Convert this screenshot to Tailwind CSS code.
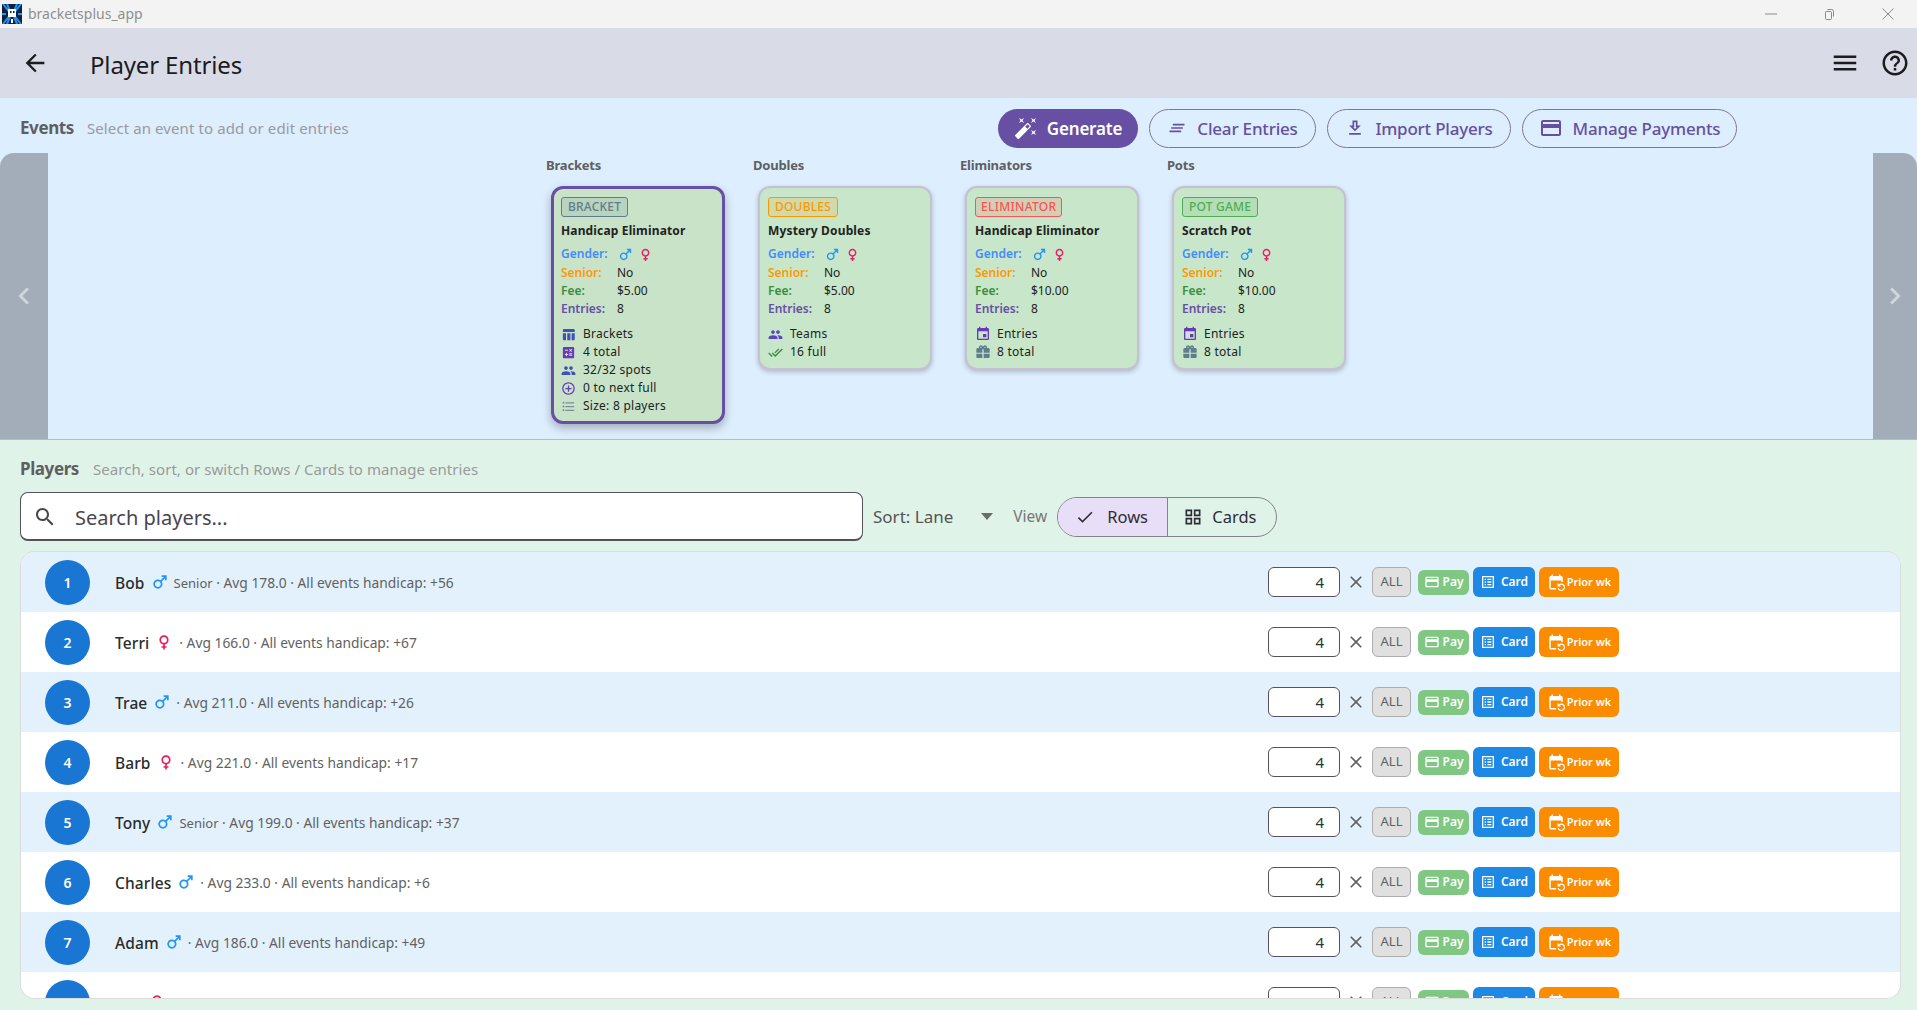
<!DOCTYPE html>
<html lang="en">
<head>
  <meta charset="UTF-8">
  <title>bracketsplus_app</title>
  <script src="https://cdn.jsdelivr.net/npm/@tailwindcss/browser@4"></script>
</head>
<body class="font-['Noto_Sans',sans-serif] antialiased overflow-hidden">

  <!-- icon sprite -->
  <svg class="hidden">
    <symbol id="i-male" viewBox="0 0 24 24"><path d="M9.5 11c1.93 0 3.5 1.57 3.5 3.5S11.43 18 9.5 18 6 16.43 6 14.5 7.57 11 9.5 11zm0-2C6.46 9 4 11.46 4 14.5S6.46 20 9.5 20s5.5-2.46 5.5-5.5c0-1.16-.36-2.23-.97-3.12L18 7.42V10h2V4h-6v2h2.58l-3.97 3.97C11.73 9.36 10.66 9 9.5 9z"/></symbol>
    <symbol id="i-female" viewBox="0 0 24 24"><path d="M17.5 9.5C17.5 6.46 15.04 4 12 4S6.5 6.46 6.5 9.5c0 2.7 1.94 4.93 4.5 5.4V17H9v2h2v2h2v-2h2v-2h-2v-2.1c2.56-.47 4.5-2.7 4.5-5.4zm-9 0C8.5 7.57 10.07 6 12 6s3.5 1.57 3.5 3.5S13.93 13 12 13s-3.5-1.57-3.5-3.5z"/></symbol>
    <symbol id="i-table" viewBox="0 0 24 24"><path d="M10 10.02h5V21h-5zM17 21h3c1.1 0 2-.9 2-2v-9h-5v11zm3-18H5c-1.1 0-2 .9-2 2v3h19V5c0-1.1-.9-2-2-2zM3 19c0 1.1.9 2 2 2h3V10H3v9z"/></symbol>
    <symbol id="i-calc" viewBox="0 0 24 24"><path d="M19 3H5c-1.1 0-2 .9-2 2v14c0 1.1.9 2 2 2h14c1.1 0 2-.9 2-2V5c0-1.1-.9-2-2-2zm-5.97 4.06L14.09 6l1.41 1.41L16.91 6l1.06 1.06-1.41 1.41 1.41 1.41-1.06 1.06-1.41-1.4-1.41 1.41-1.06-1.06 1.41-1.41-1.41-1.42zm-6.78.66h5v1.5h-5v-1.5zM11.5 16h-2v2H8v-2H6v-1.5h2v-2h1.5v2h2V16zm6.5 1.25h-5v-1.5h5v1.5zm0-2.5h-5v-1.5h5v1.5z"/></symbol>
    <symbol id="i-people" viewBox="0 0 24 24"><path d="M16 11c1.66 0 2.99-1.34 2.99-3S17.66 5 16 5c-1.66 0-3 1.34-3 3s1.34 3 3 3zm-8 0c1.66 0 2.99-1.34 2.99-3S9.66 5 8 5C6.34 5 5 6.34 5 8s1.34 3 3 3zm0 2c-2.33 0-7 1.17-7 3.5V19h14v-2.5c0-2.33-4.67-3.5-7-3.5zm8 0c-.29 0-.62.02-.97.05 1.16.84 1.97 1.97 1.97 3.45V19h6v-2.5c0-2.33-4.67-3.5-7-3.5z"/></symbol>
    <symbol id="i-add" viewBox="0 0 24 24"><path d="M13 7h-2v4H7v2h4v4h2v-4h4v-2h-4V7zm-1-5C6.48 2 2 6.48 2 12s4.48 10 10 10 10-4.48 10-10S17.52 2 12 2zm0 18c-4.41 0-8-3.59-8-8s3.59-8 8-8 8 3.59 8 8-3.59 8-8 8z"/></symbol>
    <symbol id="i-list" viewBox="0 0 24 24"><path d="M4 10.5c-.83 0-1.5.67-1.5 1.5s.67 1.5 1.5 1.5 1.5-.67 1.5-1.5-.67-1.5-1.5-1.5zm0-6c-.83 0-1.5.67-1.5 1.5S3.17 7.5 4 7.5 5.5 6.83 5.5 6 4.83 4.5 4 4.5zm0 12c-.83 0-1.5.68-1.5 1.5s.68 1.5 1.5 1.5 1.5-.68 1.5-1.5-.67-1.5-1.5-1.5zM7 19h14v-2H7v2zm0-6h14v-2H7v2zm0-8v2h14V5H7z"/></symbol>
    <symbol id="i-done" viewBox="0 0 24 24"><path d="M18 7l-1.41-1.41-6.34 6.34 1.41 1.41L18 7zm4.24-1.41L11.66 16.17 7.48 12l-1.41 1.41L11.66 19l12-12-1.42-1.41zM.41 13.41L6 19l1.41-1.41L1.83 12 .41 13.41z"/></symbol>
    <symbol id="i-event" viewBox="0 0 24 24"><path d="M17 12h-5v5h5v-5zM16 1v2H8V1H6v2H5c-1.11 0-1.99.9-1.99 2L3 19c0 1.1.89 2 2 2h14c1.1 0 2-.9 2-2V5c0-1.1-.9-2-2-2h-1V1h-2zm3 18H5V8h14v11z"/></symbol>
    <symbol id="i-redeem" viewBox="0 0 24 24"><path fill-rule="evenodd" d="M20 6h-2.18c.11-.31.18-.65.18-1 0-1.66-1.34-3-3-3-1.05 0-1.96.54-2.5 1.35l-.5.67-.5-.68C10.96 2.54 10.05 2 9 2 7.34 2 6 3.34 6 5c0 .35.07.69.18 1H4c-1.11 0-1.99.89-1.99 2L2 19c0 1.11.89 2 2 2h16c1.11 0 2-.89 2-2V8c0-1.11-.89-2-2-2zm-5-2c.55 0 1 .45 1 1s-.45 1-1 1-1-.45-1-1 .45-1 1-1zM9 4c.55 0 1 .45 1 1s-.45 1-1 1-1-.45-1-1 .45-1 1-1zm2 4h2v13h-2zM2 13h9v1.5H2zm11 0h9v1.5h-9z"/></symbol>
    <symbol id="i-pay" viewBox="0 0 24 24"><path d="M20 4H4c-1.11 0-1.99.89-1.99 2L2 18c0 1.11.89 2 2 2h16c1.11 0 2-.89 2-2V6c0-1.11-.89-2-2-2zm0 14H4v-6h16v6zm0-10H4V6h16v2z"/></symbol>
    <symbol id="i-card" viewBox="0 0 24 24"><path d="M19 5v14H5V5h14m1.1-2H3.9c-.5 0-.9.4-.9.9v16.2c0 .4.4.9.9.9h16.2c.4 0 .9-.5.9-.9V3.9c0-.5-.5-.9-.9-.9zM11 7h6v2h-6V7zm0 4h6v2h-6v-2zm0 4h6v2h-6zM7 7h2v2H7zm0 4h2v2H7zm0 4h2v2H7z"/></symbol>
    <symbol id="i-prior" viewBox="0 0 24 24"><path d="M21 12V6c0-1.1-.9-2-2-2h-1V2h-2v2H8V2H6v2H5c-1.1 0-2 .9-2 2v14c0 1.1.9 2 2 2h7v-2H5V10h14v2h2zm-5.36 8c.43 1.45 1.77 2.5 3.36 2.5 1.93 0 3.5-1.57 3.5-3.5s-1.57-3.5-3.5-3.5c-.95 0-1.82.38-2.45 1H18V18h-4v-4h1.5v1.43c.9-.88 2.14-1.43 3.5-1.43 2.76 0 5 2.24 5 5s-2.24 5-5 5c-2.42 0-4.44-1.72-4.9-4h1.54z"/></symbol>
    <symbol id="i-close" viewBox="0 0 24 24"><path d="M19 6.41L17.59 5 12 10.59 6.41 5 5 6.41 10.59 12 5 17.59 6.41 19 12 13.41 17.59 19 19 17.59 13.41 12z"/></symbol>
  </svg>

  <div class="w-[1917px] h-[1010px] flex flex-col">

    <!-- Window title bar -->
    <div class="h-[28px] bg-[#f3f3f3] flex items-center shrink-0">
      <svg class="w-[20px] h-[20px] ml-[2px]" viewBox="0 0 20 20">
        <rect width="20" height="20" fill="#10203a"/>
        <path d="M1 0l7 9M19 0l-7 9M1 20l7-9M19 20l-7-9M0 10h4M16 10h4M5 0l3 7M15 0l-3 7M5 20l3-7M15 20l-3-7" stroke="#1f93f0" stroke-width="2"/>
        <rect x="6" y="5" width="8" height="8" fill="#fff"/>
        <rect x="8" y="7" width="1.5" height="2" fill="#10203a"/>
        <rect x="11" y="7" width="1.5" height="2" fill="#10203a"/>
        <rect x="9" y="15" width="2" height="4" fill="#fff"/>
      </svg>
      <span class="ml-[6px] mb-[1px] text-[14px] text-[#8f8f8f]">bracketsplus_app</span>
      <div class="ml-auto flex items-center">
        <svg class="w-[12px] h-[12px] mr-[46px]" viewBox="0 0 12 12"><path d="M0 6h12" stroke="#8a8a8a"/></svg>
        <svg class="w-[12px] h-[12px] mr-[47px]" viewBox="0 0 12 12" fill="none" stroke="#8a8a8a"><rect x="2.5" y="3.5" width="6" height="8" rx="1"/><path d="M4.5 1.5h4a2 2 0 0 1 2 2v5"/></svg>
        <svg class="w-[12px] h-[12px] mr-[23px]" viewBox="0 0 12 12"><path d="M.5.5l11 11M11.5.5l-11 11" stroke="#8a8a8a"/></svg>
      </div>
    </div>

    <!-- App bar -->
    <div class="h-[70px] bg-[#d9dce6] flex items-center shrink-0">
      <svg class="w-[28px] h-[28px] ml-[21px] fill-[#1c1b1f]" viewBox="0 0 24 24"><path d="M20 11H7.83l5.59-5.59L12 4l-8 8 8 8 1.41-1.41L7.83 13H20v-2z"/></svg>
      <h1 class="ml-[41px] pt-[3px] text-[24px] text-[#1c1b1f] tracking-[-0.15px]">Player Entries</h1>
      <div class="ml-auto flex items-center">
        <svg class="w-[30px] h-[30px] fill-[#1c1b1f]" viewBox="0 0 24 24"><path d="M3 18h18v-2H3v2zm0-5h18v-2H3v2zm0-7v2h18V6H3z"/></svg>
        <svg class="w-[30px] h-[30px] ml-[20px] mr-[7px] fill-[#1c1b1f]" viewBox="0 0 24 24"><path d="M11 18h2v-2h-2v2zm1-16C6.48 2 2 6.48 2 12s4.48 10 10 10 10-4.48 10-10S17.52 2 12 2zm0 18c-4.41 0-8-3.59-8-8s3.59-8 8-8 8 3.59 8 8-3.59 8-8 8zm0-14c-2.21 0-4 1.79-4 4h2c0-1.1.9-2 2-2s2 .9 2 2c0 2-3 1.75-3 5h2c0-2.25 3-2.5 3-5 0-2.21-1.79-4-4-4z"/></svg>
      </div>
    </div>

    <!-- Events -->
    <section class="h-[342px] bg-[#ddeeff] border-b border-[#b5bcc4] flex flex-col shrink-0">
      <div class="h-[55px] flex items-center pl-[20px] pr-[180px] pt-[5px] shrink-0">
        <span class="text-[17px] font-bold text-[#5f5f5f] tracking-[-0.4px]">Events</span>
        <span class="ml-[13px] text-[15px] text-[#9a9a9a] tracking-[0.1px]">Select an event to add or edit entries</span>
        <div class="ml-auto flex gap-[11px] text-[17px] font-medium text-[#65509f] tracking-[-0.2px]">
          <button class="h-[39px] w-[140px] rounded-full bg-[#674fa3] text-white font-semibold flex items-center justify-center gap-[9px]">
            <svg class="w-[24px] h-[24px] fill-white" viewBox="0 0 24 24"><path d="M7.5 5.6L10 7 8.6 4.5 10 2 7.5 3.4 5 2l1.4 2.5L5 7zm12 9.8L17 14l1.4 2.5L17 19l2.5-1.4L22 19l-1.4-2.5L22 14zM22 2l-2.5 1.4L17 2l1.4 2.5L17 7l2.5-1.4L22 7l-1.4-2.5zm-7.63 5.29c-.39-.39-1.02-.39-1.41 0L1.29 18.96c-.39.39-.39 1.02 0 1.41l2.34 2.34c.39.39 1.02.39 1.41 0L16.7 11.05c.39-.39.39-1.02 0-1.41l-2.33-2.35zm-1.03 5.49l-2.12-2.12 2.44-2.44 2.12 2.12-2.44 2.44z"/></svg>
            <span class="pt-[1px]">Generate</span>
          </button>
          <button class="h-[39px] w-[167px] rounded-full border border-[#7f7a88] flex items-center justify-center gap-[10px]">
            <svg class="w-[20px] h-[20px] fill-[#65509f]" viewBox="0 0 24 24"><path d="M5 13h14v-2H5v2zm-2 4h14v-2H3v2zM7 7v2h14V7H7z"/></svg>
            <span class="pt-[1px]">Clear Entries</span>
          </button>
          <button class="h-[39px] w-[184px] rounded-full border border-[#7f7a88] flex items-center justify-center gap-[10px]">
            <svg class="w-[20px] h-[20px] fill-[#65509f]" viewBox="0 0 24 24"><path d="M19 9h-4V3H9v6H5l7 7 7-7zm-8 2V5h2v6h1.17L12 13.17 9.83 11H11zm-6 7h14v2H5z"/></svg>
            <span class="pt-[1px]">Import Players</span>
          </button>
          <button class="h-[39px] w-[215px] rounded-full border border-[#7f7a88] flex items-center justify-center gap-[10px]">
            <svg class="w-[24px] h-[24px] fill-[#65509f]" viewBox="0 0 24 24"><use href="#i-pay"/></svg>
            <span class="pt-[1px]">Manage Payments</span>
          </button>
        </div>
      </div>

      <!-- Carousel -->
      <div class="flex-1 flex">
        <div class="w-[48px] bg-[#a3adb9] rounded-tl-[14px] flex items-center justify-center">
          <svg class="w-[34px] h-[34px] fill-white/50" viewBox="0 0 24 24"><path d="M15.41 7.41L14 6l-6 6 6 6 1.41-1.41L10.83 12z"/></svg>
        </div>
        <div class="flex-1 pl-[498px] flex">

          <!-- Brackets -->
          <div class="w-[207px]">
            <div class="h-[33px] flex items-end pb-[11px] text-[13px] font-bold text-[#5f5f5f] tracking-[-0.2px]">Brackets</div>
            <div class="ml-[5px] w-[174px] h-[238px] bg-[#c8e3c8] border-[3px] border-[#674fa3] rounded-[12px] shadow-[0_4px_10px_rgba(0,0,0,0.28)] px-[7px] pt-[8px] text-[12px] text-[#222]">
              <span class="inline-block h-[20px] leading-[18px] px-[6px] rounded-[3px] border border-[#607d8b] bg-[#607d8b]/15 text-[#607d8b] font-medium tracking-[0.2px]">BRACKET</span>
              <div class="mt-[4px] h-[20px] leading-[20px] font-bold tracking-[0.15px] whitespace-nowrap">Handicap Eliminator</div>
              <div class="mt-[3px] h-[20px] flex items-center"><span class="w-[56px] text-[#448aff] font-semibold">Gender:</span><svg class="w-[17px] h-[17px] fill-[#2196f3]"><use href="#i-male"/></svg><svg class="w-[17px] h-[17px] ml-[3px] fill-[#e91e63]"><use href="#i-female"/></svg></div>
              <div class="h-[18px] flex items-center"><span class="w-[56px] text-[#ff9800] font-semibold">Senior:</span>No</div>
              <div class="h-[18px] flex items-center"><span class="w-[56px] text-[#388e3c] font-semibold">Fee:</span>$5.00</div>
              <div class="h-[18px] flex items-center"><span class="w-[56px] text-[#6750a4] font-semibold">Entries:</span>8</div>
              <div class="mt-[7px] h-[18px] flex items-center gap-[7px] tracking-[0.25px]"><svg class="w-[15px] h-[15px] fill-[#3f51b5]"><use href="#i-table"/></svg>Brackets</div>
              <div class="h-[18px] flex items-center gap-[7px] tracking-[0.25px]"><svg class="w-[15px] h-[15px] fill-[#673ab7]"><use href="#i-calc"/></svg>4 total</div>
              <div class="h-[18px] flex items-center gap-[7px] tracking-[0.25px]"><svg class="w-[15px] h-[15px] fill-[#3f51b5]"><use href="#i-people"/></svg>32/32 spots</div>
              <div class="h-[18px] flex items-center gap-[7px] tracking-[0.25px]"><svg class="w-[15px] h-[15px] fill-[#673ab7]"><use href="#i-add"/></svg>0 to next full</div>
              <div class="h-[18px] flex items-center gap-[7px] tracking-[0.25px]"><svg class="w-[15px] h-[15px] fill-[#78909c]"><use href="#i-list"/></svg>Size: 8 players</div>
            </div>
          </div>

          <!-- Doubles -->
          <div class="w-[207px]">
            <div class="h-[33px] flex items-end pb-[11px] text-[13px] font-bold text-[#5f5f5f] tracking-[-0.2px]">Doubles</div>
            <div class="ml-[5px] w-[174px] h-[184px] bg-[#c8e6c9] border-2 border-[#c5c1cf] rounded-[12px] shadow-[0_2px_5px_rgba(0,0,0,0.22)] px-[8px] pt-[9px] text-[12px] text-[#222]">
              <span class="inline-block h-[20px] leading-[18px] px-[6px] rounded-[3px] border border-[#ff9800] bg-[#ff9800]/15 text-[#ff9800] font-medium tracking-[0.2px]">DOUBLES</span>
              <div class="mt-[4px] h-[20px] leading-[20px] font-bold tracking-[0.15px] whitespace-nowrap">Mystery Doubles</div>
              <div class="mt-[3px] h-[20px] flex items-center"><span class="w-[56px] text-[#448aff] font-semibold">Gender:</span><svg class="w-[17px] h-[17px] fill-[#2196f3]"><use href="#i-male"/></svg><svg class="w-[17px] h-[17px] ml-[3px] fill-[#e91e63]"><use href="#i-female"/></svg></div>
              <div class="h-[18px] flex items-center"><span class="w-[56px] text-[#ff9800] font-semibold">Senior:</span>No</div>
              <div class="h-[18px] flex items-center"><span class="w-[56px] text-[#388e3c] font-semibold">Fee:</span>$5.00</div>
              <div class="h-[18px] flex items-center"><span class="w-[56px] text-[#6750a4] font-semibold">Entries:</span>8</div>
              <div class="mt-[7px] h-[18px] flex items-center gap-[7px] tracking-[0.25px]"><svg class="w-[15px] h-[15px] fill-[#5e45c0]"><use href="#i-people"/></svg>Teams</div>
              <div class="h-[18px] flex items-center gap-[7px] tracking-[0.25px]"><svg class="w-[15px] h-[15px] fill-[#388e3c]"><use href="#i-done"/></svg>16 full</div>
            </div>
          </div>

          <!-- Eliminators -->
          <div class="w-[207px]">
            <div class="h-[33px] flex items-end pb-[11px] text-[13px] font-bold text-[#5f5f5f] tracking-[-0.2px]">Eliminators</div>
            <div class="ml-[5px] w-[174px] h-[184px] bg-[#c8e6c9] border-2 border-[#c5c1cf] rounded-[12px] shadow-[0_2px_5px_rgba(0,0,0,0.22)] px-[8px] pt-[9px] text-[12px] text-[#222]">
              <span class="inline-block h-[20px] leading-[18px] px-[5px] rounded-[3px] border border-[#ff5252] bg-[#ff5252]/15 text-[#ff5252] font-medium tracking-[0.3px]">ELIMINATOR</span>
              <div class="mt-[4px] h-[20px] leading-[20px] font-bold tracking-[0.15px] whitespace-nowrap">Handicap Eliminator</div>
              <div class="mt-[3px] h-[20px] flex items-center"><span class="w-[56px] text-[#448aff] font-semibold">Gender:</span><svg class="w-[17px] h-[17px] fill-[#2196f3]"><use href="#i-male"/></svg><svg class="w-[17px] h-[17px] ml-[3px] fill-[#e91e63]"><use href="#i-female"/></svg></div>
              <div class="h-[18px] flex items-center"><span class="w-[56px] text-[#ff9800] font-semibold">Senior:</span>No</div>
              <div class="h-[18px] flex items-center"><span class="w-[56px] text-[#388e3c] font-semibold">Fee:</span>$10.00</div>
              <div class="h-[18px] flex items-center"><span class="w-[56px] text-[#6750a4] font-semibold">Entries:</span>8</div>
              <div class="mt-[7px] h-[18px] flex items-center gap-[6px] tracking-[0.25px]"><svg class="w-[16px] h-[16px] fill-[#673ab7]"><use href="#i-event"/></svg>Entries</div>
              <div class="h-[18px] flex items-center gap-[6px] tracking-[0.25px]"><svg class="w-[16px] h-[16px] fill-[#607d8b]"><use href="#i-redeem"/></svg>8 total</div>
            </div>
          </div>

          <!-- Pots -->
          <div class="w-[207px]">
            <div class="h-[33px] flex items-end pb-[11px] text-[13px] font-bold text-[#5f5f5f] tracking-[-0.2px]">Pots</div>
            <div class="ml-[5px] w-[174px] h-[184px] bg-[#c8e6c9] border-2 border-[#c5c1cf] rounded-[12px] shadow-[0_2px_5px_rgba(0,0,0,0.22)] px-[8px] pt-[9px] text-[12px] text-[#222]">
              <span class="inline-block h-[20px] leading-[18px] px-[6px] rounded-[3px] border border-[#4caf50] bg-[#4caf50]/15 text-[#4caf50] font-medium tracking-[0.2px]">POT GAME</span>
              <div class="mt-[4px] h-[20px] leading-[20px] font-bold tracking-[0.15px] whitespace-nowrap">Scratch Pot</div>
              <div class="mt-[3px] h-[20px] flex items-center"><span class="w-[56px] text-[#448aff] font-semibold">Gender:</span><svg class="w-[17px] h-[17px] fill-[#2196f3]"><use href="#i-male"/></svg><svg class="w-[17px] h-[17px] ml-[3px] fill-[#e91e63]"><use href="#i-female"/></svg></div>
              <div class="h-[18px] flex items-center"><span class="w-[56px] text-[#ff9800] font-semibold">Senior:</span>No</div>
              <div class="h-[18px] flex items-center"><span class="w-[56px] text-[#388e3c] font-semibold">Fee:</span>$10.00</div>
              <div class="h-[18px] flex items-center"><span class="w-[56px] text-[#6750a4] font-semibold">Entries:</span>8</div>
              <div class="mt-[7px] h-[18px] flex items-center gap-[6px] tracking-[0.25px]"><svg class="w-[16px] h-[16px] fill-[#673ab7]"><use href="#i-event"/></svg>Entries</div>
              <div class="h-[18px] flex items-center gap-[6px] tracking-[0.25px]"><svg class="w-[16px] h-[16px] fill-[#607d8b]"><use href="#i-redeem"/></svg>8 total</div>
            </div>
          </div>

        </div>
        <div class="w-[44px] bg-[#a3adb9] rounded-tr-[14px] flex items-center justify-center">
          <svg class="w-[34px] h-[34px] fill-white/50" viewBox="0 0 24 24"><path d="M10 6L8.59 7.41 13.17 12l-4.58 4.59L10 18l6-6z"/></svg>
        </div>
      </div>
    </section>

    <!-- Players -->
    <section class="flex-1 min-h-0 bg-[#e0f3e8] px-[20px] pb-[12px] flex flex-col">
      <div class="h-[52px] flex items-center pt-[6px] shrink-0">
        <span class="text-[17px] font-bold text-[#5f5f5f] tracking-[-0.4px]">Players</span>
        <span class="ml-[14px] text-[15px] text-[#9a9a9a] tracking-[0.05px]">Search, sort, or switch Rows / Cards to manage entries</span>
      </div>
      <div class="h-[49px] flex items-center shrink-0">
        <div class="w-[843px] h-[49px] rounded-[8px] border border-[#55525c] border-b-2 bg-white flex items-center pt-[2px]">
          <svg class="w-[24px] h-[24px] ml-[12px] fill-[#49454f]" viewBox="0 0 24 24"><path d="M15.5 14h-.79l-.28-.27C15.41 12.59 16 11.11 16 9.5 16 5.91 13.09 3 9.5 3S3 5.91 3 9.5 5.91 16 9.5 16c1.61 0 3.09-.59 4.23-1.57l.27.28v.79l5 4.99L20.49 19l-4.99-5zm-6 0C7.01 14 5 11.99 5 9.5S7.01 5 9.5 5 14 7.01 14 9.5 11.99 14 9.5 14z"/></svg>
          <span class="ml-[18px] pt-[1px] text-[20px] text-[#49454f]">Search players...</span>
        </div>
        <span class="ml-[10px] text-[17px] text-[#555]">Sort: Lane</span>
        <span class="ml-[28px] w-0 h-0 border-x-[6px] border-x-transparent border-t-[7px] border-t-[#6b6b6b]"></span>
        <span class="ml-[20px] text-[15.5px] text-[#777]">View</span>
        <div class="ml-[10px] w-[220px] h-[40px] rounded-full border border-[#85838a] flex overflow-hidden text-[16.5px] text-[#2f2c36]">
          <div class="w-[110px] bg-[#e8def8] border-r border-[#85838a] flex items-center pl-[17px]">
            <svg class="w-[20px] h-[20px] fill-[#2f2c36]" viewBox="0 0 24 24"><path d="M9 16.17L4.83 12l-1.42 1.41L9 19 21 7l-1.41-1.41z"/></svg>
            <span class="ml-[12px] pt-[1px]">Rows</span>
          </div>
          <div class="flex-1 flex items-center pl-[15px]">
            <svg class="w-[20px] h-[20px] fill-[#2f2c36]" viewBox="0 0 24 24"><path d="M3 3v8h8V3H3zm6 6H5V5h4v4zm-6 4v8h8v-8H3zm6 6H5v-4h4v4zm4-16v8h8V3h-8zm6 6h-4V5h4v4zm-6 4v8h8v-8h-8zm6 6h-4v-4h4v4z"/></svg>
            <span class="ml-[9px] pt-[1px]">Cards</span>
          </div>
        </div>
      </div>

      <!-- Player rows -->
      <div id="rows" class="mt-[11px] ml-[1px] mr-[-3px] flex-1 min-h-0 overflow-hidden bg-white ring-1 ring-[#dcdcdc] rounded-[14px]"></div>
    </section>
  </div>

  <script>
    // lane, name, gender, senior, avg, handicap (row 8 is cut off by the list, only its top shows)
    const players = [
      [1, "Bob", "m", true, "178.0", 56],
      [2, "Terri", "f", false, "166.0", 67],
      [3, "Trae", "m", false, "211.0", 26],
      [4, "Barb", "f", false, "221.0", 17],
      [5, "Tony", "m", true, "199.0", 37],
      [6, "Charles", "m", false, "233.0", 6],
      [7, "Adam", "m", false, "186.0", 49],
      [8, "", "f", false, "", 0]
    ];

    document.getElementById("rows").innerHTML = players.map(([lane, name, g, senior, avg, hc]) => `
      <div class="h-[60px] flex items-center shrink-0 ${lane % 2 ? "bg-[#e3f1fd]" : "bg-white"}">
        <div class="ml-[24px] w-[45px] h-[45px] rounded-full bg-[#1976d2] text-white text-[14px] font-semibold flex items-center justify-center">${lane}</div>
        ${name
          ? `<span class="ml-[25px] pt-[4px] text-[15.5px] font-medium text-[#2b2b2b] tracking-[0.1px]">${name}</span>`
          : '<span class="ml-[25px] w-[27px]"></span>'}
        ${g === "m"
          ? '<svg class="ml-[5px] w-[20px] h-[20px] fill-[#2196f3]" viewBox="0 0 24 24"><use href="#i-male"/></svg>'
          : '<svg class="ml-[5px] mr-[1px] w-[20px] h-[20px] fill-[#e91e63]" viewBox="0 0 24 24"><use href="#i-female"/></svg>'}
        ${avg
          ? `<span class="ml-[4px] pt-[3px] text-[13.8px] text-[#616161] whitespace-nowrap">${senior ? '<span class="text-[13px]">Senior</span> ' : ""}· Avg ${avg} · All events handicap: +${hc}</span>`
          : ""}

        <div class="ml-auto mr-[281px] flex items-center">
          <div class="w-[72px] h-[30px] rounded-[6px] border border-[#55525c] bg-white text-right pr-[15px] text-[15px] leading-[28px] text-[#333]">4</div>
          <svg class="ml-[6px] w-[20px] h-[20px] fill-[#616161]" viewBox="0 0 24 24"><use href="#i-close"/></svg>
          <div class="ml-[6px] w-[39px] h-[30px] rounded-[6px] border border-[#adadad] bg-[#e0e0e0] text-[#616161] text-[13px] flex items-center justify-center">ALL</div>
          <div class="ml-[7px] w-[51px] h-[25px] rounded-[6px] bg-[#81c784] text-white text-[12px] font-semibold flex items-center justify-center gap-[3px]"><svg class="w-[16px] h-[16px] fill-white" viewBox="0 0 24 24"><use href="#i-pay"/></svg>Pay</div>
          <div class="ml-[4px] w-[62px] h-[30px] rounded-[6px] bg-[#1e88e5] text-white text-[12px] font-semibold flex items-center justify-center gap-[5px]"><svg class="w-[16px] h-[16px] fill-white" viewBox="0 0 24 24"><use href="#i-card"/></svg>Card</div>
          <div class="ml-[4px] w-[80px] h-[30px] rounded-[6px] bg-[#fb8c00] text-white text-[11px] font-semibold flex items-center justify-center gap-[2px] whitespace-nowrap"><svg class="w-[18px] h-[18px] fill-white" viewBox="0 0 24 24"><use href="#i-prior"/></svg>Prior wk</div>
        </div>
      </div>`).join("");
  </script>
</body>
</html>
